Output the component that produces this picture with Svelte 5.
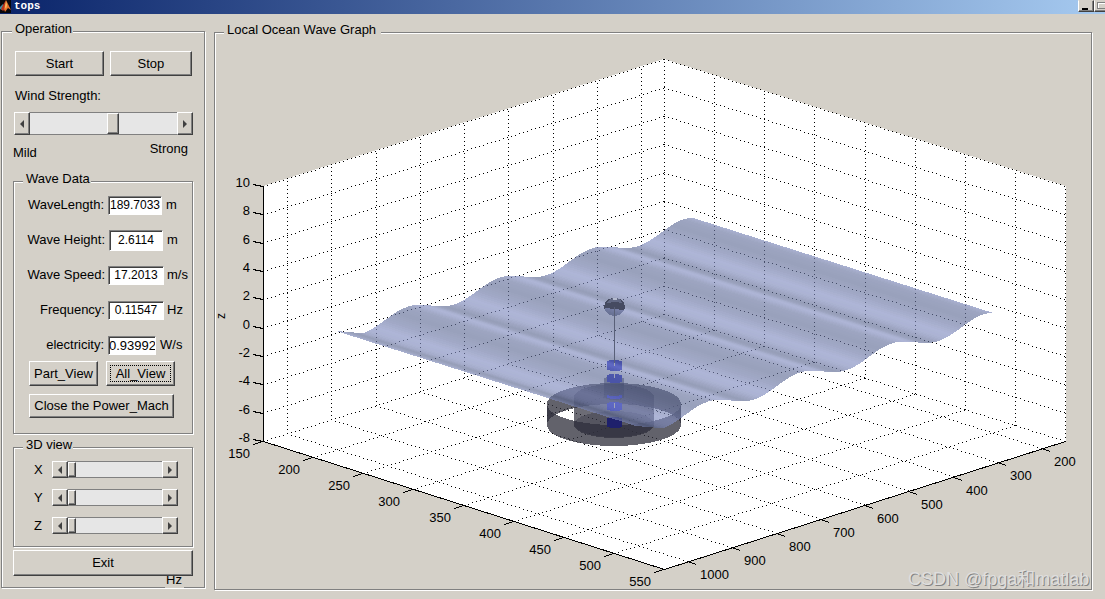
<script>
  let wind = $state(57);
  let rotX = $state(0);
  let rotY = $state(0);
  let rotZ = $state(0);

  const readings = [
    { id: 'wavelength', label: 'WaveLength:', value: '189.7033', unit: 'm', kind: 'clip' },
    { id: 'height', label: 'Wave Height:', value: '2.6114', unit: 'm', kind: 'tall' },
    { id: 'speed', label: 'Wave Speed:', value: '17.2013', unit: 'm/s', kind: 'wide' },
    { id: 'frequency', label: 'Frequency:', value: '0.11547', unit: 'Hz', kind: 'wide' },
    { id: 'electricity', label: 'electricity:', value: '0.93992', unit: 'W/s', kind: 'narrow' }
  ];

  // Corners of the axes box, projected to the drawing plane
  const L = [263, 441];
  const B = [664, 314];
  const R = [1065, 441];
  const F = [664, 569];
  const H = 255;
  const mix = (p, q, t) => [p[0] + (q[0] - p[0]) * t, p[1] + (q[1] - p[1]) * t];
  const up = (p, h) => [p[0], p[1] - h];

  function dots(p, q) {
    const span = Math.max(Math.abs(q[0] - p[0]), Math.abs(q[1] - p[1]));
    let d = '';
    for (let s = 0; s <= span; s += 4) {
      const [x, y] = mix(p, q, s / span);
      d += `M${Math.round(x)} ${Math.round(y)}h1v1h-1z`;
    }
    return d;
  }

  let grid = '';
  const zTicks = [];
  for (let v = -8; v <= 10; v += 2) {
    const h = ((v + 8) / 18) * H;
    grid += dots(up(L, h), up(B, h)) + dots(up(B, h), up(R, h));
    zTicks.push({ v, y: Math.round(441 - h) });
  }
  const xTicks = [];
  for (let v = 150; v <= 550; v += 50) {
    const t = (v - 150) / 400;
    const p = mix(L, F, t);
    const q = mix(B, R, t);
    if (v < 550) grid += dots(p, q);
    grid += dots(q, up(q, H));
    xTicks.push({ v, x: Math.round(p[0]), y: Math.round(p[1]) });
  }
  const yTicks = [];
  for (let v = 200; v <= 1000; v += 100) {
    const t = (1054 - v) / 905;
    const p = mix(L, B, t);
    const q = mix(F, R, t);
    grid += dots(p, q) + dots(p, up(p, H));
    yTicks.push({ v, x: Math.round(q[0]), y: Math.round(q[1]) });
  }

  // Rear edge of the sea surface; the sheet is this curve swept along [300, 95]
  function edge(x) {
    const at = (u) => {
      const d = u - 600;
      return 252 - 0.3167 * d + 6.2 * Math.cos((2 * Math.PI * (d - 38)) / 92);
    };
    if (x < 363) return 331 + ((x - 336) / 27) * (at(363) - 331);
    return at(x);
  }
  const dark = [88, 100, 138];
  const light = [132, 143, 194];
  const stops = [
    [0, 0.85], [0.06, 1], [0.14, 0.8], [0.24, 0.35], [0.32, 0.15], [0.4, 0.45],
    [0.48, 0.9], [0.56, 1], [0.66, 0.55], [0.78, 0.25], [0.9, 0.4], [1, 0.85]
  ];
  function shade(x) {
    const ph = (((x - 600) / 92) % 1 + 1) % 1;
    let i = 1;
    while (i < stops.length - 1 && stops[i][0] < ph) i++;
    const [a, va] = stops[i - 1];
    const [b, vb] = stops[i];
    const k = va + ((vb - va) * (ph - a)) / (b - a);
    return `rgb(${dark.map((c, n) => Math.round(c + (light[n] - c) * k)).join(',')})`;
  }
  const strips = [];
  for (let x = 336; x < 692; x += 2) {
    const e = x === 690 ? 692 : x + 3;
    const y0 = edge(x);
    const y1 = edge(e);
    strips.push({
      d: `M${x} ${y0}L${e} ${y1}L${e + 300} ${y1 + 95}L${x + 300} ${y0 + 95}Z`,
      fill: shade(x + 1)
    });
  }

  // Front and back halves of an upright cylinder wall
  const wall = (rx, ry, top, bottom, sweep) =>
    `M${614 - rx} ${top}A${rx} ${ry} 0 0 ${sweep} ${614 + rx} ${top}V${bottom}A${rx} ${ry} 0 0 ${1 - sweep} ${614 - rx} ${bottom}Z`;
</script>

{#snippet slider(label, id, get, set)}
  <div class="slider">
    <button type="button" aria-label="Decrease {label}" onclick={() => set(Math.max(0, get() - 1))}>
      <svg viewBox="0 0 4 8" width="4" height="8"><path d="M4 0v8L0 4z" /></svg>
    </button>
    <input {id} type="range" min="0" max="100" aria-label={label} value={get()} oninput={(e) => set(+e.currentTarget.value)} />
    <button type="button" aria-label="Increase {label}" onclick={() => set(Math.min(100, get() + 1))}>
      <svg viewBox="0 0 4 8" width="4" height="8"><path d="M0 0v8L4 4z" /></svg>
    </button>
  </div>
{/snippet}

<div class="window">
  <header>
    <svg class="logo" viewBox="0 0 11 13" width="11" height="13" aria-hidden="true">
      <rect width="11" height="13" fill="#08080c" />
      <path d="M0 7L3 4L4 6L2 10L0 9z" fill="#3c8fa8" />
      <path d="M3 5L6 0L5 9L3 11L1 9z" fill="#b8341c" />
      <path d="M6 0L8 4L11 10L8 8L5 12L4 9z" fill="#e8702a" />
      <path d="M6 1L7 5L6 9L5 7z" fill="#f8c060" />
    </svg>
    <span class="title">tops</span>
    <div class="caption">
      <button type="button" aria-label="Minimize"><i class="min"></i></button>
      <button type="button" aria-label="Maximize"><i class="max"></i></button>
    </div>
  </header>

  <main>
    <fieldset class="panel operation">
      <legend>Operation</legend>
      <div class="pair top">
        <button type="button" class="btn start">Start</button>
        <button type="button" class="btn stop">Stop</button>
      </div>
      <label class="wind" for="wind">Wind Strength:</label>
      {@render slider('Wind Strength', 'wind', () => wind, (v) => (wind = v))}
      <div class="ends"><span>Mild</span><span>Strong</span></div>

      <fieldset class="panel data">
        <legend>Wave Data</legend>
        <div class="rows">
          {#each readings as r}
            <div class="row {r.kind}">
              <label for={r.id}>{r.label}</label>
              <input id={r.id} type="text" value={r.value} />
              <span>{r.unit}</span>
            </div>
          {/each}
        </div>
        <div class="pair views">
          <button type="button" class="btn">Part_View</button>
          <button type="button" class="btn focus">All_View</button>
        </div>
        <button type="button" class="btn close">Close the Power_Mach</button>
      </fieldset>

      <fieldset class="panel view3d">
        <legend>3D view</legend>
        <div class="axis"><label for="rx">X</label>{@render slider('X', 'rx', () => rotX, (v) => (rotX = v))}</div>
        <div class="axis"><label for="ry">Y</label>{@render slider('Y', 'ry', () => rotY, (v) => (rotY = v))}</div>
        <div class="axis"><label for="rz">Z</label>{@render slider('Z', 'rz', () => rotZ, (v) => (rotZ = v))}</div>
      </fieldset>

      <button type="button" class="btn exit">Exit</button>
      <div class="stray"><span>Hz</span></div>
    </fieldset>

    <fieldset class="panel graph">
      <legend>Local Ocean Wave Graph</legend>
      <svg class="plot" viewBox="215 42 876 547" role="img" aria-label="Local ocean wave surface">
        <path d="M263 186L664 59L1066 186V441L664 569L263 441Z" fill="#fff" shape-rendering="crispEdges" />
        <path d={grid} fill="#000" shape-rendering="crispEdges" />
        <g stroke="#000" fill="none" shape-rendering="crispEdges">
          <path d="M263.500 186V441.500L664.500 569.500L1065.500 441.500" />
          {#each zTicks as t}<path d="M253 {t.y - 1.5}L263 {t.y + 0.5}" />{/each}
          {#each xTicks as t}<path d="M{t.x} {t.y + 0.5}L{t.x - 10} {t.y + 3.5}" />{/each}
          {#each yTicks as t}<path d="M{t.x} {t.y + 0.5}L{t.x + 8} {t.y + 3.5}" />{/each}
        </g>
        <g class="ticks">
          {#each zTicks as t}<text x="250" y={t.y + 1} text-anchor="end">{t.v}</text>{/each}
          {#each xTicks as t}<text x={t.x - 13} y={t.y + 17} text-anchor="end">{t.v}</text>{/each}
          {#each yTicks as t}<text x={t.x + 12} y={t.y + 18}>{t.v}</text>{/each}
          <text class="zname" transform="translate(225 319) rotate(-90)">z</text>
        </g>

        <g shape-rendering="crispEdges">
          <g fill="#2d2e3a" fill-opacity="0.75">
            <path d={wall(67, 21, 404, 425, 1)} />
            <path d={wall(67, 21, 404, 425, 0)} />
          </g>
          <ellipse cx="614" cy="424" rx="40" ry="13" fill="#3c3e4c" fill-opacity="0.4" />
          <path d="M574 397a40 13 0 0 1 80 0v28a40 13 0 0 1 -80 0z" fill="#2d2e3a" fill-opacity="0.7" />
          <path d="M604 378q10 -4 20 0v20q-10 4 -20 0z" fill="#10142c" fill-opacity="0.5" />
          <g fill="#1c22c8">
            <path d="M607 361q7 -2 15 0v9q-7 2 -15 0z" />
            <path d="M607 375q7 -2 15 0v7q-7 2 -15 0z" />
            <path d="M607 395q7 2 15 0v3q-7 2 -15 0z" />
            <path d="M607 403q7 -2 15 0v7q-7 2 -15 0z" />
          </g>
          <path d="M607 418q7 -2 15 0v9q-7 2 -15 0z" fill="#1e206c" />
          <path d="M604.500 307a10 9 0 0 0 20 0z" fill="#2c3250" fill-opacity="0.7" />
          <g opacity="0.65">
            {#each strips as s}<path d={s.d} fill={s.fill} />{/each}
          </g>
          <path d="M604 309q0 -11 10.500 -11t10.500 11l-2 1l-17 -2z" fill="#464b61" />
          <path d="M607 303q2 -5 8 -5t7 5l-7 -1z" fill="#626984" />
          <path d="M613 298h4v2h-4z" fill="#b4bace" />
          <path d="M614.500 307V363" stroke="#596078" />
          <path d="M614.500 363V366M614.500 372V378M614.500 403V408" stroke="#a0a6ba" />
        </g>
        <g class="mark">
          <text x="909" y="586" fill="#858585">CSDN @fpga和matlab</text>
          <text x="908" y="585" fill="#dedede">CSDN @fpga和matlab</text>
        </g>
      </svg>
    </fieldset>
  </main>
</div>

<style>
  :global(body) {
    background: #d4d0c8;
  }
  .window {
    color: #000;
    font: 13px/16px 'Liberation Sans', Arial, sans-serif;
  }
  .window :is(button, input) {
    box-sizing: border-box;
    margin: 0;
    padding: 0;
    color: inherit;
    font: inherit;
    border-radius: 0;
  }
  header {
    display: flex;
    height: 14px;
    background: linear-gradient(90deg, #0a246a, #a6caf0);
    color: #fff;
  }
  .logo {
    flex: none;
  }
  .title {
    margin-left: 3px;
    font: bold 11px/12px 'Liberation Mono', 'Courier New', monospace;
  }
  .caption {
    display: flex;
    margin-left: auto;
    height: 12px;
    width: 27px;
    overflow: hidden;
  }
  .caption button {
    flex: none;
    width: 16px;
    height: 12px;
    border: 1px solid;
    border-color: #d4d0c8 #404040 #404040 #fff;
    box-shadow: inset -1px -1px #808080;
    background: #d4d0c8;
  }
  .caption i {
    display: block;
    box-sizing: border-box;
  }
  .min {
    width: 6px;
    height: 2px;
    margin: 5px 0 0 3px;
    background: #000;
  }
  .max {
    width: 9px;
    height: 7px;
    margin: 0 0 1px 2px;
    border: 1px solid #808080;
    box-shadow: inset 1px 1px #fff;
  }
  main {
    display: grid;
    grid-template-columns: 204px minmax(0, 1fr);
    column-gap: 9px;
    align-items: start;
    padding: 7px 13px 8px 1px;
  }
  .panel {
    min-width: 0;
    margin: 0;
    padding: 0;
    border: 1px solid #808080;
    box-shadow: 1px 1px #fff, inset 1px 1px #fff;
  }
  legend {
    margin-left: 9px;
    padding: 0 1px 4px 3px;
    background: #d4d0c8;
  }
  .operation {
    padding: 10px 11px 0;
  }
  .operation > legend {
    margin-left: -1px;
  }
  .graph {
    margin-top: 1px;
  }
  .graph legend {
    padding-right: 5px;
  }
  .pair {
    display: flex;
    align-items: end;
  }
  .top {
    gap: 6px;
    padding: 0 1px 0 2px;
  }
  .btn {
    height: 25px;
    border: 1px solid;
    border-color: #fff #404040 #404040 #fff;
    box-shadow: inset -1px -1px #808080;
    background: #d4d0c8;
  }
  .window .start {
    flex: 89;
  }
  .window .stop {
    flex: 82;
  }
  .wind {
    display: block;
    margin: 12px 2px 8px;
  }
  .slider {
    display: flex;
    flex: 1;
    height: 23px;
    margin-left: 1px;
  }
  .slider button {
    flex: none;
    width: 16px;
    border: 1px solid;
    border-color: #fff #404040 #404040 #fff;
    box-shadow: inset -1px -1px #808080;
    background: #d4d0c8;
    display: grid;
    place-items: center;
    fill: #404040;
  }
  .slider input {
    appearance: none;
    flex: 1;
    min-width: 0;
    width: 0;
    height: 100%;
    background: #e6e6e6;
    border: solid #808080;
    border-width: 1px 0;
  }
  .slider input::-webkit-slider-thumb {
    appearance: none;
    box-sizing: border-box;
    width: 12px;
    height: 21px;
    border: 1px solid;
    border-color: #fff #404040 #404040 #fff;
    box-shadow: inset -1px -1px #808080;
    background: #d4d0c8;
  }
  .ends {
    display: flex;
    justify-content: space-between;
    height: 20px;
    margin: 6px 5px 10px 0;
  }
  .ends span:first-child {
    align-self: end;
  }
  .rows {
    display: grid;
    gap: 7px;
  }
  .row {
    display: flex;
    align-items: center;
    gap: 4px;
    height: 28px;
  }
  .row label {
    width: 90px;
    text-align: right;
    white-space: nowrap;
  }
  .row input {
    width: 54px;
    height: 19px;
    border: 1px solid;
    border-color: #808080 #fff #fff #808080;
    box-shadow: inset 1px 1px #404040;
    background: #fff;
    text-align: center;
    font-size: 12px;
  }
  .row.tall label,
  .row.wide label {
    width: 91px;
  }
  .row.tall input {
    height: 21px;
  }
  .row.wide {
    column-gap: 3px;
  }
  .row.wide input {
    width: 56px;
  }
  .row.narrow input {
    width: 48px;
    font-size: 13px;
  }
  .views {
    gap: 8px;
    margin: 2px 17px 8px 15px;
  }
  .views .btn {
    flex: 1;
    white-space: nowrap;
  }
  .focus {
    outline: 1px dotted #000;
    outline-offset: -5px;
  }
  .window .close {
    display: block;
    width: 145px;
    height: 24px;
    margin: 0 0 15px 15px;
    white-space: nowrap;
  }
  .view3d {
    display: grid;
    gap: 11px;
    margin-top: 3px;
    padding: 4px 14px 12px 20px;
  }
  .view3d > legend {
    margin-left: -11px;
  }
  .axis {
    display: flex;
    align-items: center;
  }
  .axis label {
    width: 17px;
  }
  .axis .slider {
    height: 17px;
  }
  .axis .slider input::-webkit-slider-thumb {
    width: 8px;
    height: 15px;
  }
  .window .exit {
    display: block;
    width: 100%;
    height: 26px;
    margin-top: 3px;
  }
  .stray {
    display: flex;
    flex-direction: column;
    justify-content: end;
    box-sizing: border-box;
    width: 19px;
    height: 12px;
    margin: 0 0 -1px 152px;
    padding: 0 0 4px 1px;
    background: #d4d0c8;
    line-height: 9px;
    overflow: hidden;
  }
  .plot {
    display: block;
    width: 100%;
    height: auto;
    overflow: visible;
  }
  .ticks {
    font-size: 13px;
  }
  .zname {
    font-size: 12px;
  }
  .mark {
    font: 18px 'Liberation Sans', 'Noto Sans CJK SC', sans-serif;
  }
</style>
